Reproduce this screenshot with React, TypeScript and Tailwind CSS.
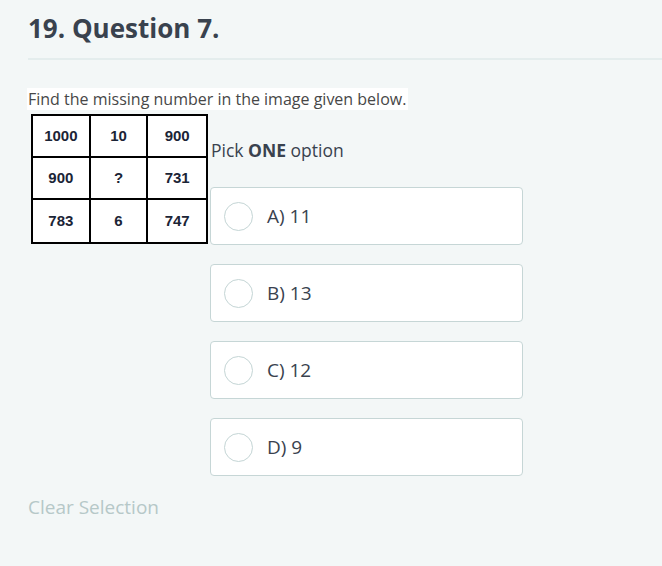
const rows = [
  ['1000', '10', '900'],
  ['900', '?', '731'],
  ['783', '6', '747'],
]

const options = ['A) 11', 'B) 13', 'C) 12', 'D) 9']

export default function App() {
  return (
    <div className="min-h-[566px] w-[662px] bg-[#f3f7f7] font-['Open_Sans',sans-serif] text-[#39424e]">
      {/* Header */}
      <div className="pl-7 pt-[10px]">
        <h1 className="text-[26px] font-bold leading-[36px]">19. Question 7.</h1>
        <div className="mt-[12px] h-[2px] bg-[#e4eded]" />
      </div>

      <div className="pl-[27px] pt-[27px]">
        <p className="inline-block bg-white pl-[1px] pr-[2px] text-[16px] leading-[22px] text-[#474747]">
          Find the missing number in the image given below.
        </p>

        <div className="mt-[3px] flex items-start">
          {/* Puzzle table */}
          <div className="ml-[4px] grid w-[177px] grid-cols-3 border-[2px] border-black bg-white">
            {rows.flat().map((v, i) => (
              <div
                key={i}
                className={`flex h-[42px] items-center justify-center font-['Liberation_Sans',sans-serif] text-[15px] font-bold text-[#1b2436] ${
                  i % 3 !== 2 ? 'border-r-[2px] border-black' : ''
                } ${i < 6 ? 'border-b-[2px] border-black' : ''}`}
              >
                {v}
              </div>
            ))}
          </div>

          {/* Options */}
          <div className="ml-[2px] pt-[22px]">
            <p className="pl-[1px] text-[17.5px] leading-[28px] text-[#39424e]">
              Pick <span className="font-bold">ONE</span> option
            </p>
            <div className="mt-[23px] flex flex-col gap-[19px]">
              {options.map((o) => (
                <div
                  key={o}
                  className="flex h-[58px] w-[313px] items-center rounded-[4px] border border-[#c6d6d6] bg-white pl-[13px]"
                >
                  <span className="h-[29px] w-[29px] rounded-full border border-[#c4d5d5] bg-white" />
                  <span className="ml-[14px] text-[19px] text-[#39424e]">{o}</span>
                </div>
              ))}
            </div>
          </div>
        </div>
      </div>

      <div className="pl-7 pt-[17px] text-[19px] text-[#b6c8c8]">Clear Selection</div>
    </div>
  )
}
